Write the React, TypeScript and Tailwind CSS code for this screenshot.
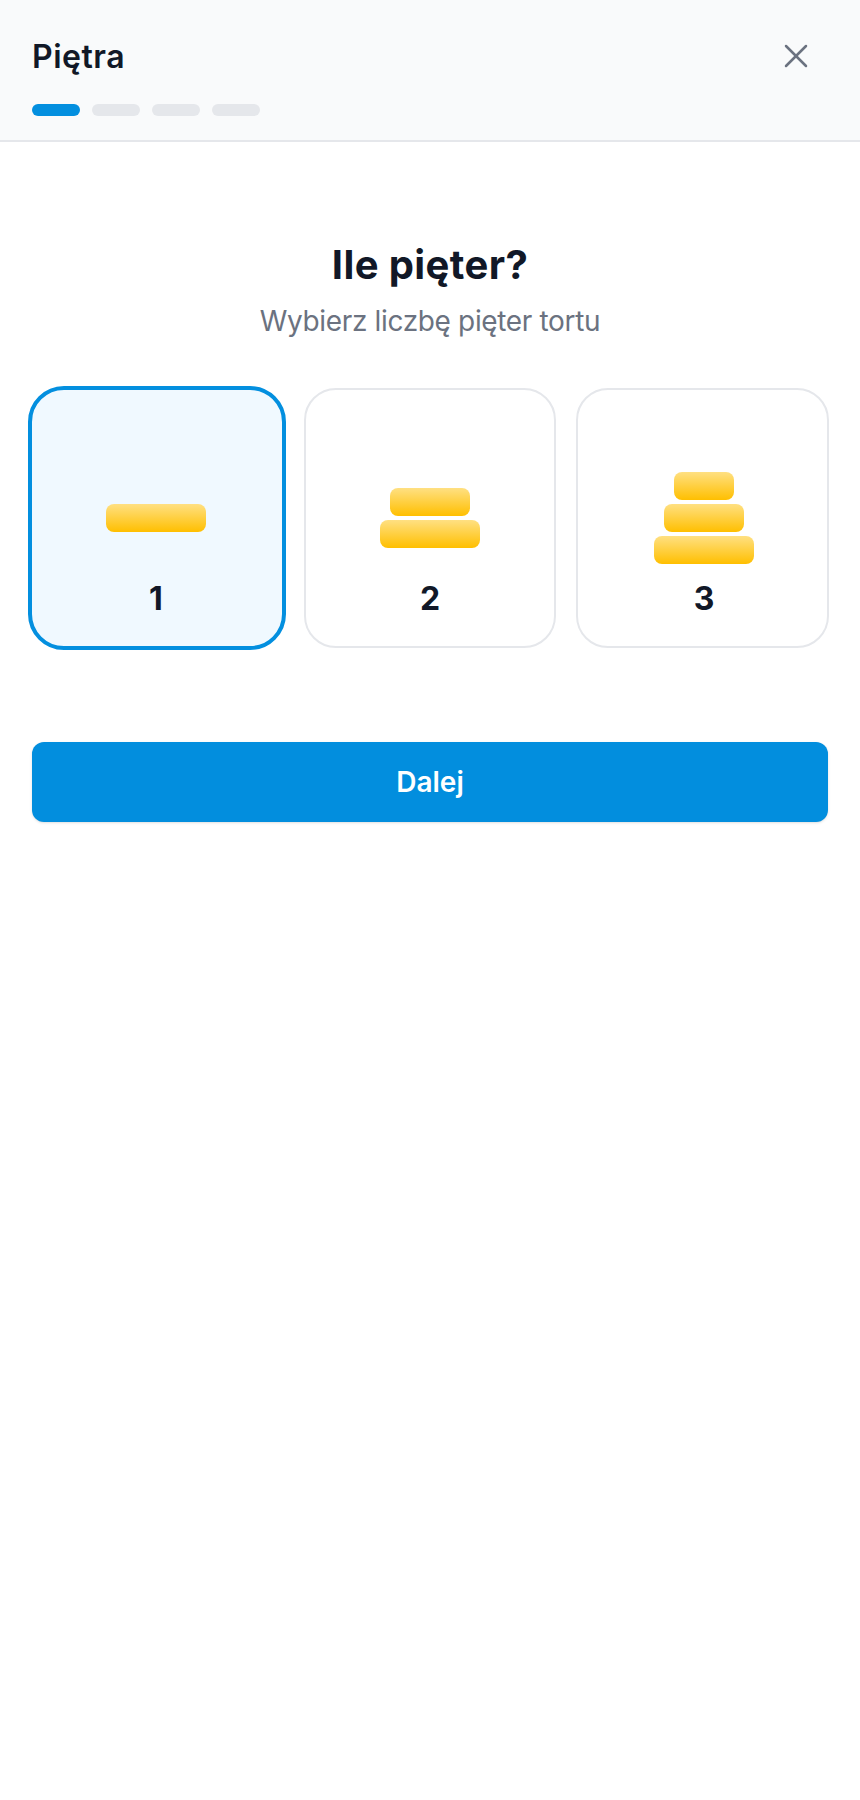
import { X } from "lucide-react";

const tiers: Record<number, string[]> = {
  1: ["w-[100px]"],
  2: ["w-[80px]", "w-[100px]"],
  3: ["w-[60px]", "w-[80px]", "w-[100px]"],
};

function TierCard({ count, selected, className }: { count: number; selected?: boolean; className: string }) {
  return (
    <button
      type="button"
      className={`${className} ${
        selected
          ? "flex h-[264px] flex-col items-center rounded-[36px] border-4 border-[#038fdf] bg-[#f0f9ff] pt-[82px] pr-[2px]"
          : "flex h-[260px] flex-col items-center rounded-[32px] border-2 border-[#e5e7eb] bg-white pt-[82px]"
      }`}
    >
      <div className="flex h-[92px] flex-col items-center justify-center gap-1">
        {tiers[count].map((w, i) => (
          <div key={i} className={`${w} h-7 rounded-lg bg-linear-to-b/srgb from-[#ffe082] to-[#ffbf00]`} />
        ))}
      </div>
      <div className="mt-[11px] text-[32px] leading-[48px] font-bold text-[#111827]">{count}</div>
    </button>
  );
}

export default function App() {
  return (
    <div className="min-h-[1800px] bg-white font-['Inter',sans-serif]">
      <header className="h-[142px] border-b-2 border-[#e5e7eb] bg-[#f9fafb] px-8 pt-6">
        <div className="flex h-16 items-center justify-between">
          <h1 className="mt-[2px] text-[32px] leading-[48px] font-semibold tracking-[0.5px] text-[#111827]">Piętra</h1>
          <button type="button" aria-label="Zamknij" className="flex h-16 w-16 items-center justify-center text-[#6b7280]">
            <X className="h-10 w-10" strokeWidth={1.5} />
          </button>
        </div>
        <div className="mt-4 flex gap-3">
          <div className="h-3 w-12 rounded-full bg-[#038fdf]" />
          <div className="h-3 w-12 rounded-full bg-[#e5e7eb]" />
          <div className="h-3 w-12 rounded-full bg-[#e5e7eb]" />
          <div className="h-3 w-12 rounded-full bg-[#e5e7eb]" />
        </div>
      </header>

      <main className="px-8 pt-[98px]">
        <h2 className="text-center text-[40px] leading-[50px] font-bold tracking-[0.4px] text-[#111827]">Ile pięter?</h2>
        <p className="mt-[11px] text-center text-[28px] leading-[40px] tracking-[-0.35px] text-[#6b7280]">
          Wybierz liczbę pięter tortu
        </p>

        <div className="mt-[45px] -ml-1 flex items-center">
          <TierCard count={1} selected className="w-[258px] shrink-0" />
          <TierCard count={2} className="ml-[18px] w-[252px] shrink-0" />
          <TierCard count={3} className="ml-[20px] w-[253px] shrink-0 pl-[3px]" />
        </div>

        <button
          type="button"
          className="mt-[92px] h-20 w-full rounded-xl bg-[#028ede] text-[28px] font-semibold text-white shadow-sm"
        >
          Dalej
        </button>
      </main>
    </div>
  );
}
